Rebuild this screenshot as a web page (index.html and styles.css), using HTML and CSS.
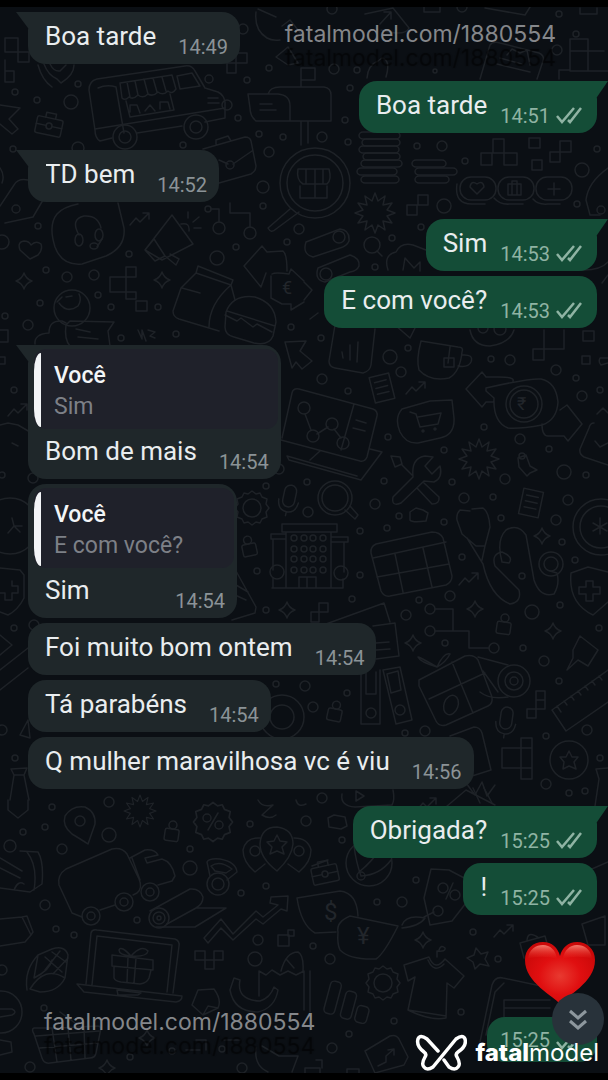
FILE: index.html
```html
<!DOCTYPE html>
<html lang="pt-BR">
<head>
    <meta charset="UTF-8">
    <meta name="viewport" content="width=device-width, initial-scale=1.0">
    <title>Conversa</title>
    <link rel="stylesheet" href="styles.css">
</head>
<body>
    <!-- Fondo con dibujos -->
    <svg class="wallpaper" viewBox="0 0 608 1080" preserveAspectRatio="xMidYMin slice" aria-hidden="true">
        <defs>
            <path id="spark" d="M0-8Q2-2 8 0Q2 2 0 8Q-2 2-8 0Q-2-2 0-8Z"/>
            <path id="burst" d="M0-20L3-12L10-17L8-8L17-10L12-3L20 0L12 3L17 10L8 8L10 17L3 12L0 20L-3 12L-10 17L-8 8L-17 10L-12 3L-20 0L-12-3L-17-10L-8-8L-10-17L-3-12Z"/>
            <path id="seal" d="M0-17L4-14L8-15L10-11L15-9L14-4L17 0L14 4L15 9L10 11L8 15L4 14L0 17L-4 14L-8 15L-10 11L-15 9L-14 4L-17 0L-14-4L-15-9L-10-11L-8-15L-4-14Z"/>
            <g id="lock"><rect x="-7" y="-3" width="14" height="12" rx="2"/><circle cy="-7" r="4"/></g>
            <g id="case"><rect x="-13" y="-8" width="26" height="17" rx="2"/><path d="M-5-8V-13H5V-8M-13 0H-3M3 0H13"/><circle r="3"/></g>
            <g id="bill"><rect x="-10" y="-13" width="20" height="26"/><path d="M-6-7H6M-6-1H6M-6 5H6"/></g>
            <g id="mic"><rect x="-6" y="-14" width="12" height="22" rx="6"/><path d="M-10 2Q-9 13 0 13Q9 13 10 2M0 13V17"/></g>
            <path id="zig" d="M-10 6L-4-1L0 3L9-6M3-6H9V0"/>
        </defs>
        <!-- círculos sueltos -->
        <g>
            <circle cx="15" cy="92" r="3"/><circle cx="37" cy="100" r="3"/><circle cx="71" cy="102" r="7"/><circle cx="78" cy="84" r="3"/><circle cx="13" cy="149" r="3"/><circle cx="78" cy="148" r="6"/>
            <circle cx="209" cy="79" r="4"/><circle cx="247" cy="80" r="3"/><circle cx="269" cy="68" r="3"/><circle cx="243" cy="29" r="5"/><circle cx="238" cy="118" r="3"/><circle cx="259" cy="134" r="3"/><circle cx="283" cy="137" r="3"/><circle cx="269" cy="152" r="5"/><circle cx="183" cy="145" r="3"/><circle cx="263" cy="187" r="6"/><circle cx="263" cy="206" r="3"/>
            <circle cx="334" cy="69" r="5"/><circle cx="357" cy="70" r="3"/><circle cx="350" cy="88" r="3"/><circle cx="345" cy="120" r="3"/><circle cx="322" cy="137" r="5"/><circle cx="348" cy="142" r="3"/><circle cx="417" cy="146" r="3"/><circle cx="442" cy="146" r="5"/><circle cx="465" cy="161" r="3"/><circle cx="597" cy="149" r="3"/><circle cx="582" cy="170" r="7"/><circle cx="576" cy="34" r="3"/><circle cx="559" cy="14" r="3"/><circle cx="557" cy="50" r="5"/><circle cx="332" cy="9" r="5"/><circle cx="462" cy="7" r="5"/><circle cx="444" cy="206" r="7"/><circle cx="577" cy="204" r="3"/><circle cx="601" cy="210" r="4"/>
            <circle cx="392" cy="238" r="3"/><circle cx="421" cy="227" r="3"/><circle cx="375" cy="267" r="3"/><circle cx="2" cy="242" r="7"/><circle cx="38" cy="226" r="3"/><circle cx="129" cy="254" r="3"/><circle cx="46" cy="270" r="3"/><circle cx="67" cy="277" r="5"/><circle cx="94" cy="275" r="5"/><circle cx="98" cy="295" r="3"/><circle cx="40" cy="303" r="3"/><circle cx="5" cy="316" r="3"/><circle cx="28" cy="325" r="5"/><circle cx="111" cy="307" r="3"/><circle cx="158" cy="307" r="3"/><circle cx="121" cy="338" r="3"/><circle cx="176" cy="334" r="3"/><circle cx="217" cy="258" r="7"/><circle cx="236" cy="247" r="3"/><circle cx="287" cy="242" r="3"/><circle cx="299" cy="229" r="5"/><circle cx="291" cy="327" r="3"/><circle cx="14" cy="390" r="3"/><circle cx="2" cy="475" r="3"/><circle cx="33" cy="478" r="5"/>
            <circle cx="322" cy="379" r="5"/><circle cx="348" cy="391" r="3"/><circle cx="321" cy="338" r="3"/><circle cx="390" cy="357" r="7"/><circle cx="401" cy="372" r="5"/><circle cx="408" cy="348" r="3"/><circle cx="388" cy="437" r="3"/><circle cx="384" cy="481" r="3"/><circle cx="375" cy="504" r="5"/><circle cx="308" cy="512" r="5"/><circle cx="307" cy="482" r="3"/><circle cx="266" cy="486" r="3"/><circle cx="279" cy="469" r="5"/><circle cx="360" cy="531" r="3"/><circle cx="387" cy="528" r="3"/><circle cx="399" cy="516" r="3"/><circle cx="360" cy="575" r="3"/><circle cx="257" cy="571" r="3"/><circle cx="266" cy="610" r="3"/><circle cx="352" cy="599" r="3"/><circle cx="406" cy="615" r="5"/><circle cx="419" cy="600" r="3"/>
            <circle cx="491" cy="359" r="3"/><circle cx="510" cy="360" r="5"/><circle cx="556" cy="370" r="5"/><circle cx="576" cy="378" r="3"/><circle cx="582" cy="396" r="5"/><circle cx="600" cy="390" r="3"/><circle cx="484" cy="427" r="3"/><circle cx="520" cy="439" r="5"/><circle cx="549" cy="449" r="3"/><circle cx="564" cy="472" r="7"/><circle cx="586" cy="475" r="3"/><circle cx="505" cy="479" r="5"/><circle cx="452" cy="482" r="3"/><circle cx="444" cy="450" r="3"/><circle cx="464" cy="498" r="5"/><circle cx="493" cy="497" r="3"/><circle cx="501" cy="518" r="3"/><circle cx="568" cy="500" r="5"/><circle cx="556" cy="520" r="5"/><circle cx="562" cy="542" r="3"/><circle cx="575" cy="560" r="3"/><circle cx="462" cy="557" r="3"/><circle cx="444" cy="522" r="3"/><circle cx="522" cy="576" r="3"/><circle cx="450" cy="596" r="5"/><circle cx="560" cy="605" r="3"/><circle cx="532" cy="612" r="7"/><circle cx="599" cy="628" r="3"/><circle cx="523" cy="648" r="3"/><circle cx="544" cy="661" r="5"/><circle cx="445" cy="643" r="3"/><circle cx="559" cy="681" r="3"/><circle cx="587" cy="730" r="5"/><circle cx="546" cy="736" r="3"/><circle cx="600" cy="758" r="3"/><circle cx="546" cy="784" r="5"/><circle cx="569" cy="793" r="3"/><circle cx="585" cy="791" r="3"/><circle cx="425" cy="731" r="5"/><circle cx="405" cy="733" r="3"/><circle cx="347" cy="693" r="3"/><circle cx="313" cy="707" r="5"/><circle cx="305" cy="686" r="5"/><circle cx="276" cy="684" r="3"/>
            <circle cx="14" cy="628" r="3"/><circle cx="34" cy="625" r="5"/><circle cx="2" cy="730" r="5"/><circle cx="15" cy="758" r="3"/><circle cx="322" cy="798" r="5"/><circle cx="306" cy="821" r="5"/><circle cx="342" cy="840" r="3"/><circle cx="416" cy="880" r="3"/><circle cx="377" cy="902" r="3"/><circle cx="402" cy="902" r="5"/><circle cx="313" cy="946" r="3"/><circle cx="330" cy="959" r="5"/><circle cx="473" cy="932" r="3"/><circle cx="498" cy="959" r="3"/><circle cx="461" cy="1012" r="3"/><circle cx="394" cy="1021" r="3"/><circle cx="349" cy="1034" r="3"/><circle cx="332" cy="1048" r="5"/>
            <circle cx="52" cy="807" r="3"/><circle cx="45" cy="827" r="3"/><circle cx="23" cy="832" r="3"/><circle cx="62" cy="849" r="5"/><circle cx="109" cy="835" r="7"/><circle cx="109" cy="802" r="5"/><circle cx="190" cy="849" r="3"/><circle cx="190" cy="868" r="7"/><circle cx="250" cy="824" r="3"/><circle cx="241" cy="893" r="3"/><circle cx="266" cy="886" r="3"/><circle cx="45" cy="905" r="5"/><circle cx="56" cy="929" r="3"/><circle cx="74" cy="935" r="3"/><circle cx="137" cy="920" r="3"/><circle cx="2" cy="970" r="5"/><circle cx="258" cy="940" r="5"/><circle cx="255" cy="959" r="7"/><circle cx="44" cy="1008" r="3"/><circle cx="130" cy="1057" r="3"/><circle cx="30" cy="1067" r="5"/><circle cx="242" cy="1068" r="5"/><circle cx="172" cy="1051" r="3"/><circle cx="222" cy="1049" r="3"/>
        </g>
        <!-- formas repetidas -->
        <g>
            <use href="#spark" x="24" y="281"/><use href="#spark" x="162" y="280"/><use href="#spark" x="475" y="609"/><use href="#spark" x="553" y="631"/><use href="#spark" x="413" y="643"/><use href="#spark" x="542" y="536"/><use href="#spark" x="287" y="610"/><use href="#spark" x="147" y="1038"/><use href="#spark" x="107" y="1068"/><use href="#spark" x="423" y="940"/>
            <use href="#burst" x="375" y="213"/><use href="#burst" x="479" y="459"/><use href="#burst" transform="translate(140 811) scale(.8)"/>
            <use href="#seal" x="252" y="508"/><circle cx="252" cy="508" r="9"/><use href="#seal" x="383" y="983"/><circle cx="383" cy="983" r="9"/>
            <use href="#seal" transform="translate(213 822) scale(1.15)"/><circle cx="207" cy="818" r="4"/><circle cx="219" cy="825" r="4"/><path d="M218 813L208 830"/>
            <use href="#lock" transform="translate(249 547) rotate(-12)"/><use href="#lock" transform="translate(504 625) rotate(8)"/><use href="#lock" transform="translate(335 712) rotate(12)"/><use href="#lock" transform="translate(172 832) rotate(8)"/>
            <use href="#case" transform="translate(49 126) rotate(12)"/><use href="#case" transform="translate(325 874) rotate(-12)"/>
            <use href="#bill" transform="translate(382 388) rotate(-14)"/><use href="#bill" transform="translate(531 503) rotate(12)"/>
            <use href="#mic" transform="translate(289 499) rotate(12)"/><use href="#mic" transform="translate(506 721) rotate(8)"/>
            <use href="#zig" x="140" y="219"/><use href="#zig" x="416" y="388"/><use href="#zig" x="469" y="579"/><use href="#zig" x="504" y="931"/><use href="#zig" x="18" y="410"/><use href="#zig" x="427" y="804"/>
        </g>
        <!-- furgoneta, maletín, buzón -->
        <g>
            <path d="M95 130L89 90Q89 81 97 79L185 66Q192 65 195 71L205 88L218 92Q224 95 225 102V118L205 122M182 126L137 133M112 138L100 141Q95 138 95 130"/>
            <path d="M98 88Q107 84 116 87L124 133M120 83L172 75L176 89Q172 95 168 91Q163 96 158 92Q153 97 148 94Q143 99 138 95Q133 100 129 97Q125 101 122 98ZM127 82L130 97M135 81L138 95M144 79L148 94M153 78L157 92M162 77L166 91M126 101L130 117L174 110L170 94M177 76L192 73L200 86L180 89ZM130 112V105H137L140 113M145 111L150 105L155 111M160 109V102H168L170 109M208 98H218M208 103H219M95 129L225 108"/>
            <circle cx="125" cy="137" r="12"/><circle cx="125" cy="137" r="6"/><circle cx="196" cy="127" r="12"/><circle cx="196" cy="127" r="6"/><circle cx="227" cy="105" r="5"/>
            <path d="M203 149L245 137Q250 137 251 141L256 166Q256 171 251 174L219 183M216 144V140L228 136L231 141M219 160L228 164M233 164L252 151"/><circle cx="230" cy="165" r="4"/>
            <path d="M248 94H278Q290 95 290 106V121H256Q250 116 250 108ZM268 94Q270 87 280 87H324Q331 88 331 95V121H290M301 87V68H315V80H301M301 121V145M308 121V143M260 104H272M260 110H276"/>
            <path d="M38 65Q42 80 52 87M44 64Q48 75 57 79L61 83Q74 75 74 65M50 64Q54 72 60 71L66 65M5 38H18V52H29V62H18V52H5ZM5 60V82H14V71H5M0 105L20 108L9 119L18 129L12 134L0 124"/>
            <path d="M256 12Q254 30 267 38Q272 41 280 40M258 9L276 17M282 26L290 20L302 35M276 57L288 47L298 63L288 65ZM236 53H247V63H236ZM227 63H236V73H227Z"/>
            <path d="M365 14L393 8L409 28Q405 37 381 30M380 24L391 12M391 12V19M391 12H384M424 12V5M424 12H440V6M485 8L525 15L530 7M580 8V14H597V8M367 78Q368 65 378 61L382 58Q391 60 386 77"/><circle cx="435" cy="71" r="2"/>
            <path d="M480 79L490 45Q493 41 500 43L539 53Q545 56 543 61L537 79M500 58L522 64M497 64L530 72M507 55L512 49L520 53L527 50L530 65M559 79V70H570M570 39H588V51H570ZM570 51V71H608M588 51V71M604 51H588"/>
        </g>
        <!-- tienda, fichas, píxeles -->
        <g>
            <circle cx="315" cy="183" r="35"/><circle cx="315" cy="183" r="28"/><path d="M298 169H329Q332 180 327 184H303Q296 180 298 169ZM306 169V184M315 169V198M323 169V184M300 186V198H327V186M290 209L268 228Q271 234 276 229L299 212"/>
            <rect x="359" y="132" width="41" height="7" rx="4"/><rect x="362" y="139" width="38" height="7" rx="4"/><rect x="359" y="146" width="40" height="7" rx="4"/><rect x="363" y="153" width="37" height="7" rx="4"/><rect x="361" y="160" width="41" height="7" rx="4"/><rect x="357" y="168" width="40" height="7" rx="4"/><rect x="361" y="176" width="38" height="7" rx="4"/><rect x="412" y="160" width="34" height="7" rx="4"/><rect x="415" y="168" width="42" height="7" rx="4"/><rect x="415" y="176" width="34" height="7" rx="4"/>
            <rect x="460" y="177" width="36" height="23" rx="11"/><rect x="498" y="177" width="36" height="23" rx="11"/><rect x="536" y="177" width="36" height="23" rx="11"/><path d="M457 184Q454 204 472 204H485M494 198Q500 205 510 204H523M533 199Q538 205 548 204H560M477 194L470 187Q471 180 477 184Q483 180 484 187ZM508 184H521V195H508ZM512 184V181H517V184M512 184V195M517 184V195M554 183V195M548 189H560"/>
            <path d="M481 153H492V165H481ZM504 153H517V165H504ZM493 139H504V153H493ZM529 138H540V148H529ZM560 141H571V152H560ZM550 152H560V162H550ZM532 160H542V170H532ZM407 205H417V215H407ZM418 195H428V205H418Z"/>
            <path d="M608 168Q588 182 586 200L590 215H600M0 168Q5 175 2 183M0 206L14 185Q18 178 28 180M5 223L33 217L43 200"/><circle cx="16" cy="209" r="4"/>
        </g>
        <!-- auriculares, megáfono, bolsa, hamburguesa -->
        <g>
            <path d="M118 203L124 228Q126 247 106 256L82 264Q62 266 55 247Q48 225 57 214Q63 207 78 204M79 235Q70 219 84 216Q98 215 101 228M102 239L97 247"/><ellipse cx="79" cy="240" rx="4" ry="6"/><ellipse cx="99" cy="235" rx="4" ry="6"/><ellipse cx="94" cy="246" rx="4" ry="3"/>
            <path d="M30 259L20 250Q17 242 24 241Q29 241 31 245Q36 240 41 244Q43 250 38 255ZM145 250L172 215L193 244L162 260ZM145 250L154 239L165 256L155 261ZM165 256L176 265L179 259L170 254M181 224Q190 222 189 231M188 218V212M193 222L199 217M194 228H201"/>
            <path d="M110 277H126V292H110ZM126 267H136V277H126ZM126 277V299H136V292H126M136 301H147V311H136ZM138 330L142 339V330L146 341M148 330L155 332L150 336L155 338"/>
            <circle cx="219" cy="228" r="6"/><circle cx="250" cy="233" r="6"/><circle cx="208" cy="209" r="3"/><path d="M211 209H219V222M230 203V213H250V227"/>
            <path d="M198 266L233 280L231 285L196 273ZM196 273L181 288L173 311Q173 317 179 319L219 331M231 285Q209 304 209 327M231 285L235 300M182 288L200 293"/>
            <path d="M226 312Q233 294 255 297Q275 303 276 322L273 336Q269 346 254 343L234 337Q225 335 225 327ZM227 311L275 326M225 315L237 321L241 318L253 327L257 324L272 332"/>
            <path d="M244 266L262 246L267 252L283 251Q287 254 287 271M244 266L261 287L266 273M272 274Q275 272 289 274L291 269L304 281M271 276V298L282 304H291V310L304 302"/>
            <circle cx="72" cy="308" r="18"/><path d="M57 302L62 297M66 297L72 296M59 303Q67 314 78 306Q82 300 79 294M35 344Q34 334 49 333Q49 320 62 321L66 323M66 325Q64 339 70 346M66 325L70 321L114 322L108 331L110 346M76 329L90 332M78 337L98 339"/>
            <path d="M0 330H8V342H0M0 357H5V364H0M285 342L306 341L300 351L312 361L302 369L296 362L292 368ZM0 425L8 423L18 425L30 432M12 443L18 446"/>
            <path d="M306 242L340 229Q350 230 349 241Q347 246 340 248L313 257Q302 254 306 242"/><circle cx="339" cy="237" r="6"/>
            <circle cx="372" cy="245" r="8"/><path d="M377 251L382 256"/><path d="M318 268L350 255Q360 258 359 266Q357 271 350 272L325 282Q314 280 318 268"/><circle cx="326" cy="274" r="6"/>
            <path d="M388 270Q383 255 396 252Q401 242 413 245L426 250M403 270L405 258L414 268L420 262V271M304 282L312 290L304 300M310 319L318 313M580 270Q600 271 608 262M602 283L608 275"/>
        </g>
        <!-- taza, carrito, flechas -->
        <g>
            <path d="M335 325L329 361Q329 367 335 368L363 373Q370 371 371 365L375 329M342 352L343 358M350 345V360M358 342L357 362M421 341L458 347Q464 347 462 352Q460 372 449 378Q430 382 419 370Q416 360 421 341ZM450 347L448 363M444 358H454V367H444ZM462 355Q474 354 471 362Q468 368 458 366M395 325L410 338L415 328"/>
            <path d="M470 330Q473 346 490 346Q510 343 514 330"/><circle cx="483" cy="328" r="5"/><circle cx="500" cy="329" r="6"/>
            <path d="M544 330V349H564V330M533 349H544V360H533ZM583 331H594V341H583ZM582 356H590V364H582ZM608 358H600Q598 362 601 365L608 363"/>
            <path d="M513 381Q515 377 498 377H486L482 372L466 389L482 407L486 402H493M486 391L494 398Q493 422 508 428Q520 429 542 425Q557 420 558 402Q556 382 541 379Q530 378 486 388ZM560 410L567 405L582 424L568 441L564 436H548Q542 436 542 424"/><circle cx="524" cy="404" r="18"/><circle cx="524" cy="404" r="14"/>
            <path d="M430 401L402 409Q394 418 400 432Q406 444 418 443L440 438Q455 435 454 418L452 400ZM410 412L416 414L420 427L438 424L441 413L418 417M594 423Q590 423 589 428L580 449Q579 454 584 457L608 465M595 441L600 447L608 443M597 414L603 408L608 413"/><circle cx="423" cy="431" r="1"/><circle cx="435" cy="429" r="1"/>
            <path d="M526 455L530 466L537 470L530 473L527 476L519 467L518 458Z"/><circle cx="522" cy="456" r="3"/>
        </g>
        <!-- portátil con gráfico, herramientas, edificio -->
        <g>
            <path d="M282 438L292 393Q293 388 299 389L373 409Q378 411 377 416L367 457Q365 462 360 461L281 440M354 404L341 450M356 420L366 423M353 428L365 431M370 449L382 452L361 480L289 460L287 456L357 476M310 460L320 451M305 414L311 430M317 434L328 427M334 429L341 438"/><circle cx="304" cy="408" r="6"/><circle cx="313" cy="436" r="6"/><circle cx="332" cy="424" r="6"/><circle cx="343" cy="443" r="6"/>
            <circle cx="335" cy="498" r="17"/><circle cx="335" cy="498" r="13"/><path d="M345 510L355 519L358 515L350 506"/>
            <path d="M391 456L400 457L402 464L395 467ZM401 464L412 475M393 497L413 477Q411 458 425 456L433 457L425 466L432 474L440 466Q443 478 434 482L424 481L401 503Q391 507 393 497ZM417 488L432 504Q440 504 439 497L424 483"/><path d="M410 512V520Q412 523 426 521L428 513L423 510L416 508Z"/>
            <path d="M282 524H337V532H282ZM271 534H286V539H271ZM331 537H348V542H331ZM273 540V570M286 532V588M331 532V588M344 542V572M272 588H343V579M273 578V588M299 588V577H316V588M307 577V588"/><circle cx="277" cy="572" r="7"/><circle cx="341" cy="573" r="7"/>
            <g><circle cx="294" cy="538" r="3"/><circle cx="304" cy="538" r="3"/><circle cx="313" cy="538" r="3"/><circle cx="323" cy="538" r="3"/><circle cx="294" cy="549" r="3"/><circle cx="304" cy="549" r="3"/><circle cx="313" cy="549" r="3"/><circle cx="323" cy="549" r="3"/><circle cx="294" cy="559" r="3"/><circle cx="304" cy="559" r="3"/><circle cx="313" cy="559" r="3"/><circle cx="323" cy="559" r="3"/><circle cx="294" cy="570" r="3"/><circle cx="304" cy="570" r="3"/><circle cx="313" cy="570" r="3"/><circle cx="323" cy="570" r="3"/></g>
            <path d="M371 553Q370 547 376 544L432 532Q440 532 443 538L452 576Q452 582 446 585L390 596Q384 597 381 591ZM373 558L446 542M377 577L449 564M395 554L403 592M423 548L432 587"/>
        </g>
        <!-- fonendoscopio, escudo, monedas -->
        <g>
            <path d="M470 511L460 510Q456 514 457 520L462 534L476 546H485L490 527Q489 512 483 508L472 509M467 538L483 564Q490 596 510 604Q522 602 519 590L495 566Q491 554 502 552Q514 557 509 563L502 562Q496 540 506 530Q518 523 526 535L534 580Q540 598 554 594Q560 584 557 573L550 571M485 546L482 560"/><circle cx="551" cy="564" r="12"/><circle cx="551" cy="564" r="7"/>
            <path d="M571 573L588 567L608 572M571 573Q568 603 593 615L608 602M586 581H593V587H600V594H593V601H586V594H579V587H586Z"/><circle cx="601" cy="527" r="28"/><circle cx="601" cy="527" r="21"/>
            <circle cx="10" cy="526" r="28"/><path d="M0 568L20 570L24 575V598Q18 610 8 615L0 612M12 581V586H18V593H12V600H5V593H0M12 518L14 526L8 533M14 526H22M14 526L20 532M600 518V534M593 523L607 531M593 531L607 523"/>
            <circle cx="430" cy="609" r="5"/><circle cx="430" cy="631" r="5"/><circle cx="494" cy="648" r="5"/><path d="M435 609H453V631M435 631H469V648H489M319 603H328V612H319ZM311 612H319V622H311ZM326 624L384 603L390 622M373 626L395 623L399 656L376 659M376 643L389 642M376 650L390 649"/>
            <path d="M236 571L256 607L255 613L232 620M236 585L248 592M235 595L246 600"/>
            <path d="M573 650L580 636L598 650L588 666L578 660L567 670L573 658ZM552 710L608 670M552 710L566 731L608 702M557 706L561 712M564 701L567 705M571 696L574 700M578 691L581 695M585 686L588 690M592 681L595 685M599 676L602 680M0 670L28 648M0 690L28 668M0 635L12 645L0 655M20 735L28 720L30 738Z"/>
        </g>
        <!-- carpetas, regalo, cámara -->
        <g>
            <path d="M361 670V724H380V670M366 672V694H376V672M383 670L396 724L412 720L400 667ZM387 674L398 671L401 690L391 693Z"/><circle cx="371" cy="713" r="5"/><circle cx="400" cy="710" r="5"/>
            <path d="M419 680L465 656Q474 654 478 660L492 697Q493 704 488 706L446 725Q439 727 436 721L419 686ZM429 699L485 673M452 662L473 713M437 667Q418 656 418 657Q420 662 437 667Q444 652 450 654Q446 662 437 667M478 657L508 665M483 671L498 692M480 692Q490 700 508 697"/><ellipse cx="451" cy="705" rx="7" ry="10" transform="rotate(20 451 705)"/><circle cx="514" cy="681" r="16"/><circle cx="514" cy="681" r="9"/><circle cx="514" cy="681" r="4"/>
            <path d="M536 691H545V700H536ZM536 700H545V709H536ZM527 709H536V718H527ZM502 748H521V768H502ZM521 738H532V748H521ZM521 768H532V779H521ZM532 748V768M450 736L474 727Q480 727 482 733L491 770L472 776M596 769L608 768M596 769L599 779L595 806M473 788L480 803M484 788L492 803"/><circle cx="569" cy="760" r="19"/><path d="M569 751L572 757L578 757L574 762L576 769L569 766L563 769L564 762L560 757L566 757Z"/>
            <circle cx="282" cy="717" r="22"/><circle cx="282" cy="717" r="12"/><path d="M11 769L27 768L24 775H14ZM14 775L10 800M24 775L29 800"/>
        </g>
        <!-- globo terráqueo, etiqueta, camiseta -->
        <g>
            <path d="M342 794Q340 806 355 807L392 805Q395 800 393 790M356 791L364 796L356 801ZM328 818L334 815L345 817L347 826L341 829L329 827ZM440 812L466 790L495 805M466 783L475 795L482 782L487 796L495 785"/>
            <circle cx="369" cy="863" r="23"/><circle cx="361" cy="876" r="4"/><path d="M354 846Q356 862 361 876Q380 875 391 860M359 872Q372 862 383 845"/>
            <path d="M297 898L340 891Q357 893 358 916M297 898Q301 925 315 933L336 932M338 932Q336 922 350 916L398 926Q384 954 376 959Q350 960 340 950Q337 944 338 932"/>
            <path d="M431 869L449 870L468 880L466 903L452 921L430 925L424 898ZM402 925Q406 914 425 918Q420 926 402 928"/><circle cx="443" cy="888" r="5"/><circle cx="455" cy="895" r="5"/><path d="M453 883L446 899"/><circle cx="438" cy="911" r="5"/><path d="M434 912L424 917"/>
            <path d="M404 965L429 957Q435 972 445 959L464 976L454 988L447 983L446 1018Q430 1021 408 1010L415 977L408 981ZM428 960Q434 974 444 964M408 1010L446 1016M437 957V951Q446 952 445 948Q441 944 439 950"/>
            <path d="M476 948L481 954L488 952L485 959L489 966L480 964L475 969L473 962L467 958L474 955ZM520 943L545 936L552 962M520 943L524 958M527 940Q528 930 539 938M582 924L605 916V945L588 945Z"/>
            <path d="M480 1042L492 985Q495 976 503 978L560 990M486 1035L495 992L504 983M504 1000H550M504 1008H550M504 1020V1000M585 872L608 862M585 872L590 885"/>
            <rect x="327" y="981" width="11" height="33" rx="4" transform="rotate(15 332 998)"/><rect x="343" y="991" width="11" height="28" rx="4" transform="rotate(15 348 1005)"/><rect x="356" y="1006" width="12" height="17" rx="4" transform="rotate(15 362 1014)"/>
            <path d="M365 1051L390 1036Q396 1034 399 1039L408 1057L404 1065L375 1073ZM378 1066L386 1062V1056L394 1049M388 1050L394 1049V1055M305 1068H320V1073M305 1068V1073M316 1060H322V1068M347 1073V1069H359V1073"/>
        </g>
        <!-- camión, globos, alfombra -->
        <g>
            <path d="M8 800V810L18 818L28 810V800M88 844Q82 840 72 834Q62 826 65 816Q72 805 85 807Q96 812 95 824Z"/><circle cx="80" cy="821" r="5"/>
            <path d="M72 913L59 885Q57 875 66 869L112 849Q122 847 127 854L139 879Q143 888 137 893L133 895M82 917L72 913M100 910L115 905M130 858L145 850Q155 849 158 855L145 858L147 863L162 859Q172 862 175 876L172 881L158 885M132 858L140 880"/><circle cx="91" cy="916" r="9"/><circle cx="91" cy="916" r="4"/><circle cx="124" cy="902" r="9"/><circle cx="124" cy="902" r="4"/><circle cx="150" cy="892" r="9"/><circle cx="150" cy="892" r="4"/>
            <circle cx="159" cy="918" r="10"/><circle cx="159" cy="918" r="6"/><circle cx="159" cy="918" r="2"/><path d="M150 911L190 889Q200 888 203 897Q203 904 196 908L167 924M197 908H226L195 927H156"/>
            <circle cx="218" cy="884" r="11"/><circle cx="218" cy="884" r="6"/><path d="M210 876L207 862Q209 858 220 859Q236 862 237 872L227 880M211 866Q220 860 232 869L226 873L215 871Z"/>
            <path d="M277 871Q260 858 260 844Q261 827 277 827Q293 829 293 844Q292 857 277 871ZM260 838Q246 837 243 850Q243 862 255 872L265 864M294 838Q308 838 311 850Q311 862 299 872L288 864M277 835L280 841L287 842L282 847L284 854L277 851L270 854L272 847L267 842L274 841Z"/><circle cx="255" cy="851" r="5"/><circle cx="299" cy="851" r="5"/>
            <path d="M204 938L221 919L233 934L256 911L263 917L278 905L270 903L271 897L288 896L287 911L281 909L263 924L256 919L233 940L221 928L208 943ZM195 951H205V960H195ZM205 960H214V969H205ZM214 951H223V960H214ZM278 935H289V946H278ZM288 930H294V936H288Z"/>
            <path d="M86 984L91 933Q92 929 97 930L175 939Q180 941 179 946L173 993M92 985L97 936L172 945L167 992M77 984L182 996Q182 1001 176 1002L84 992ZM117 990L141 993L138 995H118ZM112 955L153 960V970L112 966ZM114 967V978Q115 981 121 982L140 984Q147 983 149 978L151 970M128 957L127 982M136 958L134 983M131 956Q121 945 119 950Q119 955 131 956Q142 944 148 951Q147 957 131 956"/>
            <path d="M27 990Q24 970 38 955L34 978Q50 970 52 960M30 989Q45 965 65 978Q58 992 40 992ZM38 955L52 949Q65 945 68 955L65 978M45 957L62 972M52 952L66 962M45 970L60 951M53 974L68 958"/>
            <path d="M34 1028H60L98 1026Q102 1026 100 1033L96 1053Q95 1058 90 1058L50 1063Q44 1064 42 1058L34 1034Q31 1029 34 1028M36 1036L99 1031M40 1048L98 1043M52 1028L57 1062M68 1028L71 1060M84 1027L85 1058M60 1012L75 1023M0 1040L11 1042L12 1052L0 1055"/>
            <circle cx="1" cy="1012" r="21"/><path d="M0 1009H12Q18 1012 12 1015L0 1017M0 919L22 917L31 935L25 942L0 946M22 917L27 916L33 932L31 935"/>
            <circle cx="10" cy="846" r="6"/><path d="M20 851L38 852Q44 862 42 884L30 892L0 888M27 852Q38 866 34 890M0 858L22 871M0 868L20 878M14 890Q18 880 24 884"/>
            <path d="M192 1005L198 990L214 989Q222 1000 218 1008L203 1015ZM203 1015L208 1006L218 1008M234 978L240 980Q236 1000 260 1001Q270 998 274 987L278 990Q275 1008 258 1012Q234 1012 230 990ZM259 996V971L266 975L272 970L280 975L288 971L296 975L304 971V1010M310 971V1012M281 971Q286 952 298 952Q304 955 303 971M287 960L294 968M256 1048Q254 1066 268 1072M262 1046L279 1056H298M298 1056L292 1072M186 1050H200M196 1040H206V1050M224 1040H240"/>
            <path d="M258 800Q262 808 273 805L262 815Q270 820 276 815M296 800Q298 808 306 804M312 866L328 860"/>
        </g>
        <g class="coins">
            <text x="282" y="294">€</text><text x="517" y="410">₹</text><text x="324" y="920" class="big">$</text><text x="357" y="944" class="big">¥</text>
        </g>
    </svg>

    <main class="chat">
        <div class="msg in tail">
            <p>Boa tarde</p>
            <time>14:49</time>
        </div>

        <div class="msg out tail">
            <p>Boa tarde</p>
            <time>14:51</time>
            <svg class="checks" viewBox="0 0 26 18"><path d="M1 10L6 16L18 2M12 14L14 16L25 2"/></svg>
        </div>

        <div class="msg in tail">
            <p>TD bem</p>
            <time>14:52</time>
        </div>

        <div class="msg out tail">
            <p>Sim</p>
            <time>14:53</time>
            <svg class="checks" viewBox="0 0 26 18"><path d="M1 10L6 16L18 2M12 14L14 16L25 2"/></svg>
        </div>
        <div class="msg out">
            <p>E com você?</p>
            <time>14:53</time>
            <svg class="checks" viewBox="0 0 26 18"><path d="M1 10L6 16L18 2M12 14L14 16L25 2"/></svg>
        </div>

        <div class="msg in tail reply">
            <blockquote>
                <strong>Você</strong>
                <span>Sim</span>
            </blockquote>
            <p>Bom de mais</p>
            <time>14:54</time>
        </div>
        <div class="msg in reply">
            <blockquote>
                <strong>Você</strong>
                <span>E com você?</span>
            </blockquote>
            <p>Sim</p>
            <time>14:54</time>
        </div>
        <div class="msg in">
            <p>Foi muito bom ontem</p>
            <time>14:54</time>
        </div>
        <div class="msg in">
            <p>Tá parabéns</p>
            <time>14:54</time>
        </div>
        <div class="msg in">
            <p>Q mulher maravilhosa vc é viu</p>
            <time>14:56</time>
        </div>

        <div class="msg out tail">
            <p>Obrigada?</p>
            <time>15:25</time>
            <svg class="checks" viewBox="0 0 26 18"><path d="M1 10L6 16L18 2M12 14L14 16L25 2"/></svg>
        </div>
        <div class="msg out">
            <p>!</p>
            <time>15:25</time>
            <svg class="checks" viewBox="0 0 26 18"><path d="M1 10L6 16L18 2M12 14L14 16L25 2"/></svg>
        </div>

        <svg class="heart" viewBox="0 0 72 66" role="img" aria-label="Coração">
            <defs>
                <radialGradient id="red" cx="50%" cy="55%" r="60%">
                    <stop offset="0" stop-color="#e83a30"/>
                    <stop offset=".5" stop-color="#e00f10"/>
                    <stop offset="1" stop-color="#c90808"/>
                </radialGradient>
                <linearGradient id="shine" x1="0" y1="0" x2="0" y2="1">
                    <stop offset="0" stop-color="#ff9585" stop-opacity=".8"/>
                    <stop offset="1" stop-color="#ef3a2c" stop-opacity="0"/>
                </linearGradient>
            </defs>
            <path fill="url(#red)" d="M36 63C30 55 1 42 1 19C1 8 9 1 19 1C28 1 34 7 36 15C38 7 44 1 53 1C63 1 71 8 71 19C71 42 42 55 36 63Z"/>
            <path fill="url(#shine)" d="M4 18C5 8 12 4 19 4C26 4 32 9 33 18C26 15 10 15 4 18ZM39 18C40 9 46 4 53 4C60 4 67 8 68 18C62 15 46 15 39 18Z"/>
        </svg>
        <div class="msg out sticker-time">
            <time>15:25</time>
            <svg class="checks" viewBox="0 0 26 18"><path d="M1 10L6 16L18 2M12 14L14 16L25 2"/></svg>
        </div>
    </main>

    <button class="to-bottom" type="button" aria-label="Ir para o fim">
        <svg viewBox="0 0 22 24"><path d="M3 3L11 10L19 3M3 13L11 20L19 13"/></svg>
    </button>

    <!-- Marcas de agua -->
    <div class="watermark top">fatalmodel.com/1880554</div>
    <div class="watermark bottom">fatalmodel.com/1880554</div>

    <div class="brand">
        <svg viewBox="0 0 52 38" aria-hidden="true"><path d="M23 17L12 5Q5 0 3 5Q1 12 9 18Q12 20 10 23Q6 30 9 33Q12 37 18 33L41 5Q48 0 50 5Q52 12 43 18Q40 20 42 23Q46 30 43 33Q40 37 34 33L29 26"/></svg>
        <span><b>fatal</b>model</span>
    </div>
</body>
</html>
```
FILE: styles.css
```css
* {
    box-sizing: border-box;
}
body {
    position: relative;
    min-height: 100vh;
    margin: 0;
    background-color: #0b0f14;
    border-top: 7px solid #000;
    border-bottom: 7px solid #000;
    font-family: Roboto, "Liberation Sans", sans-serif;
    overflow: hidden;
}

/* Fondo */
.wallpaper {
    position: absolute;
    top: -7px;
    left: 0;
    width: 100%;
    fill: none;
    stroke: #1e2227;
    stroke-width: 1.5;
    stroke-linejoin: round;
    stroke-linecap: round;
    clip-path: inset(7px 0);
}
.coins {
    fill: #22262b;
    stroke: none;
    font-size: 18px;
}
.coins .big {
    font-size: 24px;
}

/* Mensajes */
.chat {
    position: relative;
    display: flex;
    flex-direction: column;
    gap: 5px;
    padding: 5px 11px 0 28px;
}
.msg {
    position: relative;
    display: flex;
    align-items: flex-end;
    height: 52px;
    border-radius: 18px;
    color: #e9edef;
}
.msg p {
    margin: 0;
    font-size: 26px;
    line-height: 52px;
    height: 54px;
}
.msg time {
    color: #8b9397;
    font-size: 20px;
    line-height: 34px;
}
.in {
    align-self: flex-start;
    padding: 0 12px 0 17px;
    background-color: #1f272a;
}
.in time {
    margin-left: auto;
    padding-left: 22px;
}
.out {
    align-self: flex-end;
    padding: 0 15px 0 17px;
    background-color: #144d37;
}
.out time {
    padding-left: 13px;
    color: #8fb3a3;
}
.tail:not(:first-child) {
    margin-top: 12px;
}
.tail::before {
    content: "";
    position: absolute;
    top: 0;
    width: 30px;
    height: 16px;
}
.in.tail::before {
    left: -12px;
    background-color: #1f272a;
    clip-path: polygon(0 0, 100% 0, 100% 100%, 12px 100%);
}
.out.tail::before {
    right: -11px;
    background-color: #144d37;
    clip-path: polygon(0 0, 100% 0, 19px 100%, 0 100%);
}
.checks {
    width: 26px;
    height: 18px;
    margin: 0 0 9px 6px;
    fill: none;
    stroke: #8fb3a3;
    stroke-width: 2.5;
}

/* Respuestas */
.reply {
    display: grid;
    grid-template-columns: auto 1fr;
    grid-template-rows: 83px 51px;
    align-items: end;
    height: 134px;
}
blockquote {
    position: relative;
    z-index: 1;
    grid-column: 1 / -1;
    align-self: start;
    display: flex;
    flex-direction: column;
    height: 80px;
    margin: 4px -9px 0 -11px;
    padding: 11px 51px 0 20px;
    border-radius: 12px;
    background-color: #1f212a;
    font-size: 23px;
    line-height: 31px;
}
blockquote::before {
    content: "";
    position: absolute;
    top: 4px;
    bottom: 2px;
    left: 0;
    width: 7px;
    border-radius: 7px 0 0 7px / 18px 0 0 18px;
    background-color: #f3f5f7;
}
blockquote strong {
    font-weight: 500;
    color: #f3f5f7;
}
blockquote span {
    color: #7d8087;
}

.heart {
    align-self: flex-end;
    width: 72px;
    height: 66px;
    margin: 21px 1px 0 0;
}
.sticker-time {
    height: 45px;
    margin-top: 5px;
    padding-left: 13px;
}
.sticker-time time {
    padding-left: 0;
    line-height: 44px;
}
.sticker-time .checks {
    margin-bottom: 12px;
}

.to-bottom {
    position: absolute;
    right: 4px;
    bottom: 28px;
    width: 52px;
    height: 52px;
    padding: 15px;
    border: 0;
    border-radius: 50%;
    background-color: #28323a;
}
.to-bottom svg {
    display: block;
    width: 22px;
    height: 24px;
    fill: none;
    stroke: #8d979d;
    stroke-width: 3;
}

/* Marcas de agua y logo */
.watermark {
    position: absolute;
    color: #85878b;
    font-family: Inter, sans-serif;
    font-size: 23px;
    line-height: 28px;
    text-shadow: 0 24px 1px rgba(0, 0, 0, 0.6);
}
.watermark.top {
    top: 13px;
    right: 52px;
}
.watermark.bottom {
    bottom: 37px;
    left: 44px;
}

.brand {
    position: absolute;
    right: 9px;
    bottom: 1px;
    display: flex;
    align-items: center;
    gap: 8px;
    color: #fff;
    font-family: Inter, sans-serif;
    font-size: 24px;
    line-height: 34px;
}
.brand b {
    font-weight: 800;
}
.brand svg {
    width: 52px;
    height: 38px;
    fill: none;
    stroke: #fff;
    stroke-width: 3.5;
    stroke-linecap: round;
    stroke-linejoin: round;
}
```
